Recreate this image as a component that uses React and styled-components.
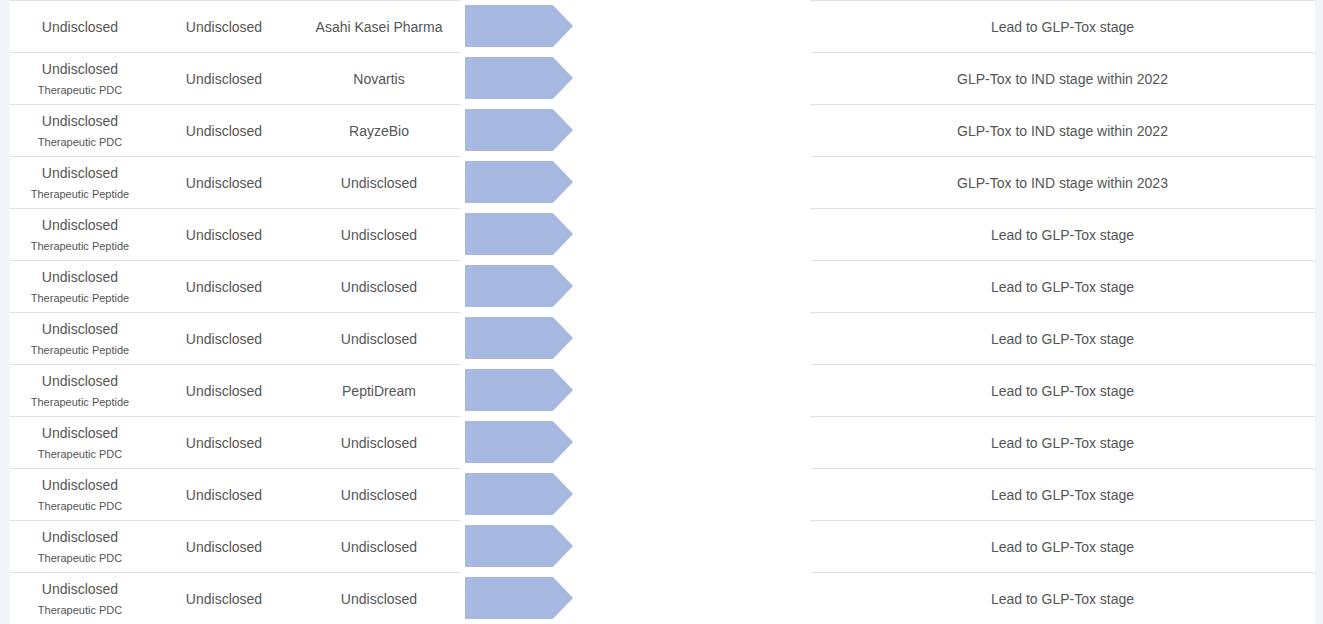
import React from "react";
import styled, { createGlobalStyle } from "styled-components";

const rows = [
  { name: "Undisclosed", sub: "", target: "Undisclosed", partner: "Asahi Kasei Pharma", goal: "Lead to GLP-Tox stage" },
  { name: "Undisclosed", sub: "Therapeutic PDC", target: "Undisclosed", partner: "Novartis", goal: "GLP-Tox to IND stage within 2022" },
  { name: "Undisclosed", sub: "Therapeutic PDC", target: "Undisclosed", partner: "RayzeBio", goal: "GLP-Tox to IND stage within 2022" },
  { name: "Undisclosed", sub: "Therapeutic Peptide", target: "Undisclosed", partner: "Undisclosed", goal: "GLP-Tox to IND stage within 2023" },
  { name: "Undisclosed", sub: "Therapeutic Peptide", target: "Undisclosed", partner: "Undisclosed", goal: "Lead to GLP-Tox stage" },
  { name: "Undisclosed", sub: "Therapeutic Peptide", target: "Undisclosed", partner: "Undisclosed", goal: "Lead to GLP-Tox stage" },
  { name: "Undisclosed", sub: "Therapeutic Peptide", target: "Undisclosed", partner: "Undisclosed", goal: "Lead to GLP-Tox stage" },
  { name: "Undisclosed", sub: "Therapeutic Peptide", target: "Undisclosed", partner: "PeptiDream", goal: "Lead to GLP-Tox stage" },
  { name: "Undisclosed", sub: "Therapeutic PDC", target: "Undisclosed", partner: "Undisclosed", goal: "Lead to GLP-Tox stage" },
  { name: "Undisclosed", sub: "Therapeutic PDC", target: "Undisclosed", partner: "Undisclosed", goal: "Lead to GLP-Tox stage" },
  { name: "Undisclosed", sub: "Therapeutic PDC", target: "Undisclosed", partner: "Undisclosed", goal: "Lead to GLP-Tox stage" },
  { name: "Undisclosed", sub: "Therapeutic PDC", target: "Undisclosed", partner: "Undisclosed", goal: "Lead to GLP-Tox stage" },
];

function App() {
  return (
    <>
      <GlobalStyle />
      <Page>
        <Table>
          {rows.map((row, i) => (
            <Row key={i}>
              <Cell>
                <Main>{row.name}</Main>
                {row.sub && <Sub>{row.sub}</Sub>}
              </Cell>
              <Cell>
                <Main>{row.target}</Main>
              </Cell>
              <Cell>
                <Main>{row.partner}</Main>
              </Cell>
              <StageCell>
                <Arrow />
              </StageCell>
              <Cell>
                <Main>{row.goal}</Main>
              </Cell>
            </Row>
          ))}
        </Table>
      </Page>
    </>
  );
}

export default App;

const borderColor = "#e2dfef";

const GlobalStyle = createGlobalStyle`
  body {
    margin: 0;
    background: #f4f5fa;
    font-family: "Liberation Sans", Arial, sans-serif;
    color: #555;
  }
`;

const Page = styled.div`
  padding: 0 8px 0 10px;
  height: 624px;
  overflow: hidden;
`;

const Table = styled.div`
  background: #fff;
`;

const Row = styled.div`
  display: grid;
  grid-template-columns: 140px 148px 162px 350px 505px;
  height: 52px;
`;

const Cell = styled.div`
  display: flex;
  flex-direction: column;
  align-items: center;
  justify-content: center;
  border-top: 1px solid ${borderColor};
  text-align: center;
`;

const StageCell = styled.div`
  display: flex;
  align-items: center;
  padding-left: 5px;
  border-top: 1px solid transparent;
`;

const Main = styled.div`
  font-size: 14px;
  line-height: 20px;
`;

const Sub = styled.div`
  font-size: 11px;
  line-height: 18px;
  margin-top: 2px;
`;

const Arrow = styled.div`
  width: 108px;
  height: 42px;
  margin-top: -1px;
  background: #a7b8e1;
  clip-path: polygon(0 0, 88px 0, 100% 50%, 88px 100%, 0 100%);
`;
